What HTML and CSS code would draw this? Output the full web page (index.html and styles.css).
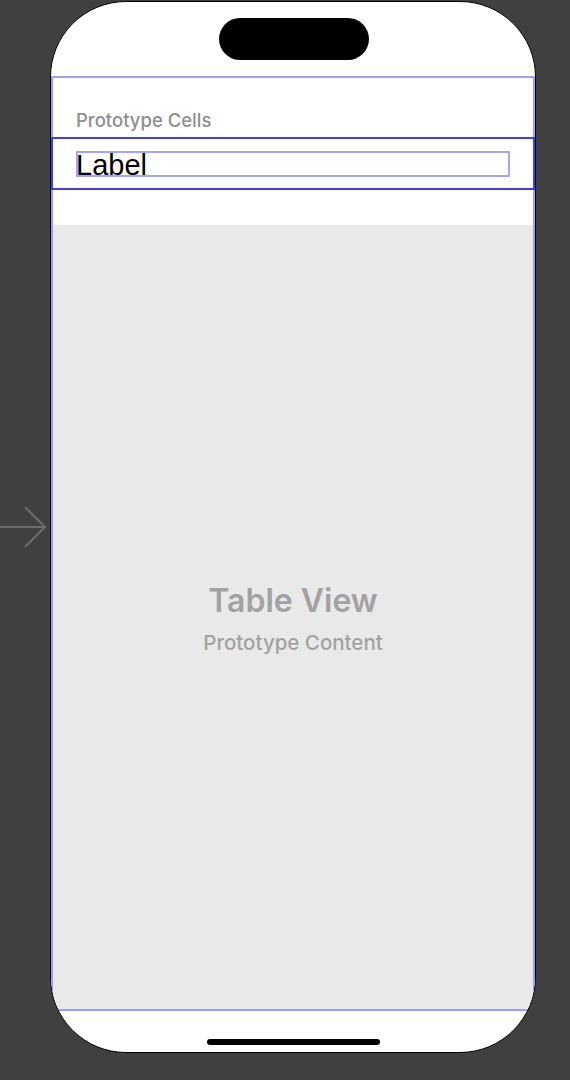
FILE: index.html
```html
<!DOCTYPE html>
<html>
<head>
<meta charset="utf-8">
<link rel="stylesheet" href="styles.css">
</head>
<body>
<div class="canvas">
  <svg class="entry-arrow" width="48" height="44" viewBox="0 0 48 44">
    <path d="M0 22 H45 M25 2 L45 22 L25 42" fill="none" stroke="#6b6b6b" stroke-width="2.2"/>
  </svg>
  <div class="phone">
    <div class="status-area">
      <div class="island"></div>
    </div>
    <div class="table-view">
      <div class="section-header">Prototype Cells</div>
      <div class="cell">
        <div class="label-box"><span class="label">Label</span></div>
      </div>
      <div class="spacer"></div>
      <div class="content-area">
        <div class="tv-title">Table View</div>
        <div class="tv-sub">Prototype Content</div>
      </div>
    </div>
    <div class="home-area">
      <div class="home-indicator"></div>
    </div>
  </div>
</div>
</body>
</html>
```
FILE: styles.css
```css
* { box-sizing: border-box; }
html, body { margin: 0; padding: 0; }
body {
  background: #404040;
  width: 570px;
  height: 1080px;
  overflow: hidden;
  font-family: Inter, "Noto Sans", sans-serif;
}
.canvas {
  display: flex;
  align-items: center;
  padding-top: 1px;
  gap: 2px;
}
.entry-arrow { display: block; flex: none; }
.phone {
  flex: none;
  width: 486px;
  height: 1052px;
  border: 1px solid #000;
  border-radius: 76px;
  background: #fff;
  overflow: hidden;
  display: flex;
  flex-direction: column;
}
.status-area {
  height: 74px;
  display: flex;
  justify-content: center;
  padding-top: 16px;
  padding-left: 2px;
}
.island {
  width: 150px;
  height: 42px;
  background: #000;
  border-radius: 21px;
}
.table-view {
  height: 935px;
  border: 2px solid #9c9cff;
  display: flex;
  flex-direction: column;
}
.section-header {
  height: 59px;
  padding: 31px 0 0 23px;
  font-size: 18.5px;
  font-weight: 500;
  color: #8e8e8e;
}
.cell {
  height: 53px;
  margin: 0 -2px;
  border: 2px solid #3d3df5;
  padding: 12px 23px 0 23px;
}
.label-box {
  height: 26px;
  border: 2px solid #a4a4ff;
  display: flex;
  align-items: center;
}
.label {
  font-family: "Liberation Sans", Arial, sans-serif;
  font-size: 29px;
  color: #000;
  line-height: 22px;
  margin-left: -2px;
  margin-top: 1px;
}
.spacer { height: 35px; }
.content-area {
  flex: 1;
  background: #e9e9e9;
  display: flex;
  flex-direction: column;
  align-items: center;
  padding-top: 357px;
}
.tv-title {
  font-size: 32px;
  font-weight: 600;
  color: #a2a2a2;
  line-height: 38px;
}
.tv-sub {
  font-size: 20.5px;
  font-weight: 500;
  color: #a2a2a2;
  margin-top: 11px;
  line-height: 24px;
}
.home-area {
  flex: 1;
  display: flex;
  justify-content: center;
  padding-top: 28px;
}
.home-indicator {
  width: 173px;
  height: 6px;
  border-radius: 3px;
  background: #000;
}
```
